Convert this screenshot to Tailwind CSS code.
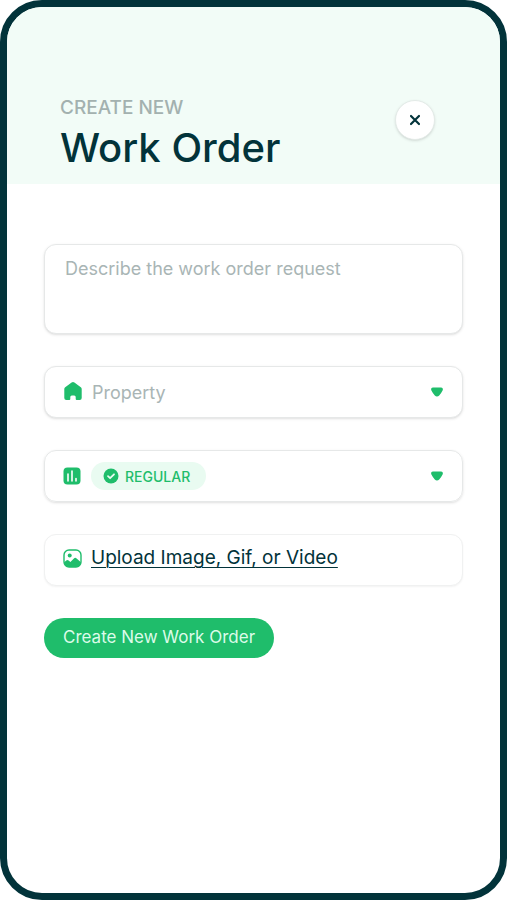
<!DOCTYPE html>
<html lang="en">
<head>
<meta charset="utf-8">
<meta name="viewport" content="width=device-width, initial-scale=1">
<title>Create New Work Order</title>
<script src="https://cdn.jsdelivr.net/npm/@tailwindcss/browser@4"></script>
</head>
<body class="bg-white font-[Inter,sans-serif] text-[#02333a]">
<main class="flex min-h-screen flex-col overflow-hidden rounded-[42px] border-[7px] border-[#02333a] bg-white">
  <header class="flex items-start justify-between bg-[#f2fcf7] pt-[89px] pr-[65px] pb-3 pl-[53px]">
    <h1 class="flex flex-col gap-1">
      <span class="text-[19px] leading-6 font-medium text-[#a3b1af]">CREATE NEW</span>
      <span class="text-[40px] leading-12 font-medium">Work Order</span>
    </h1>
    <button type="button" aria-label="Close" class="mt-1 flex size-10 items-center justify-center rounded-full border border-[#e4ebe8] bg-white shadow-sm">
      <svg class="size-3" viewBox="0 0 12 12" fill="none" stroke="currentColor" stroke-width="2.2" stroke-linecap="round" aria-hidden="true"><path d="M2 2l8 8M10 2l-8 8"/></svg>
    </button>
  </header>
  <form class="flex flex-col items-start gap-8 px-[37px] pt-[60px] pb-8">
    <textarea aria-label="Work order request" placeholder="Describe the work order request" class="block h-[90px] w-full resize-none rounded-xl border border-[#e6e8e8] bg-white px-5 py-3 text-[18px] leading-6 shadow-sm outline-none placeholder:text-[#a9b5b5]"></textarea>

    <div class="relative w-full">
      <svg class="pointer-events-none absolute top-4 left-5 size-[18px] text-[#1fbd6b]" viewBox="0 0 18 18" fill="currentColor" aria-hidden="true"><path d="M7.600.6a2.200 2.200 0 0 1 2.800 0l6.400 4.700c.6.500.9 1.100.9 1.800V16a2 2 0 0 1-2 2h-3a1 1 0 0 1-1-1v-2a1.500 1.500 0 0 0-1.500-1.500H7.800A1.500 1.500 0 0 0 6.300 15v2a1 1 0 0 1-1 1h-3a2 2 0 0 1-2-2V7.100c0-.7.300-1.300.9-1.800z"/></svg>
      <select aria-label="Property" class="block h-[52px] w-full appearance-none rounded-xl border border-[#e6e8e8] bg-white pr-12 pl-[47px] text-[18px] text-[#a9b5b5] shadow-sm outline-none"><option>Property</option></select>
      <svg class="pointer-events-none absolute top-[21px] right-5 h-[10px] w-3 text-[#1fbd6b]" viewBox="0 0 12 10" fill="currentColor" aria-hidden="true"><path d="M1.900.4h8.200c1.600 0 2.200 1.700 1.500 3-.8 1.700-2 3.500-3.400 5-1.300 1.400-3.100 1.400-4.400 0C2.400 6.900 1.200 5.100.4 3.400-.3 2.100.3.400 1.900.4z"/></svg>
    </div>

    <div class="relative w-full rounded-xl bg-white">
      <span class="pointer-events-none absolute top-3 left-[47px] flex h-7 w-[115px] items-center rounded-full bg-[#e9fbf1] pl-3">
        <svg class="size-4" viewBox="0 0 16 16" aria-hidden="true"><circle cx="8" cy="8" r="7.500" fill="#1fbd6b"/><path d="M5 8.200l2.100 2L11 6.300" fill="none" stroke="#e9fbf1" stroke-width="1.800" stroke-linecap="round" stroke-linejoin="round"/></svg>
      </span>
      <svg class="pointer-events-none absolute top-[17px] left-[19px] size-[18px]" viewBox="0 0 18 18" aria-hidden="true"><rect x=".5" y=".5" width="17" height="17" rx="4" fill="#1fbd6b"/><path d="M5 7v7M9 4v10M13 11.500V14" stroke="#fff" stroke-width="1.600" stroke-linecap="round"/></svg>
      <select aria-label="Priority" class="relative block h-[52px] w-full appearance-none rounded-xl border border-[#e6e8e8] bg-transparent pr-12 pl-20 text-[14px] font-medium text-[#1fbd6b] shadow-sm outline-none"><option>REGULAR</option></select>
      <svg class="pointer-events-none absolute top-[21px] right-5 h-[10px] w-3 text-[#1fbd6b]" viewBox="0 0 12 10" fill="currentColor" aria-hidden="true"><path d="M1.900.4h8.200c1.600 0 2.200 1.700 1.500 3-.8 1.700-2 3.500-3.400 5-1.300 1.400-3.100 1.400-4.400 0C2.400 6.900 1.200 5.100.4 3.400-.3 2.100.3.400 1.900.4z"/></svg>
    </div>

    <label class="relative flex h-[52px] w-full cursor-pointer items-center gap-[9px] rounded-xl border border-[#f0f1f1] bg-white pr-5 pb-1 pl-[18px] shadow-xs">
      <svg class="size-[19px] shrink-0" viewBox="0 0 19 19" aria-hidden="true"><rect x="1" y="1" width="17" height="17" rx="5" fill="#fff" stroke="#1fbd6b" stroke-width="1.400"/><circle cx="6.700" cy="6.600" r="2" fill="#1fbd6b"/><path d="M1 13.600l2.200-2.100c.8-.7 1.700-.7 2.400 0l1.800 1.500 3.500-3.600c.8-.8 1.900-.8 2.700 0L18 13.300c-.2 3-1.900 4.700-4.900 4.700H6c-3 0-4.800-1.500-5-4.400z" fill="#1fbd6b"/></svg>
      <span class="text-[19px] leading-6 underline decoration-1 underline-offset-3">Upload Image, Gif, or Video</span>
      <input type="file" accept="image/*,video/*" class="sr-only">
    </label>

    <button type="submit" class="h-10 rounded-full bg-[#1fbd6b] px-[19px] text-[17px] text-[#dcfbe9]">Create New Work Order</button>
  </form>
</main>
</body>
</html>
